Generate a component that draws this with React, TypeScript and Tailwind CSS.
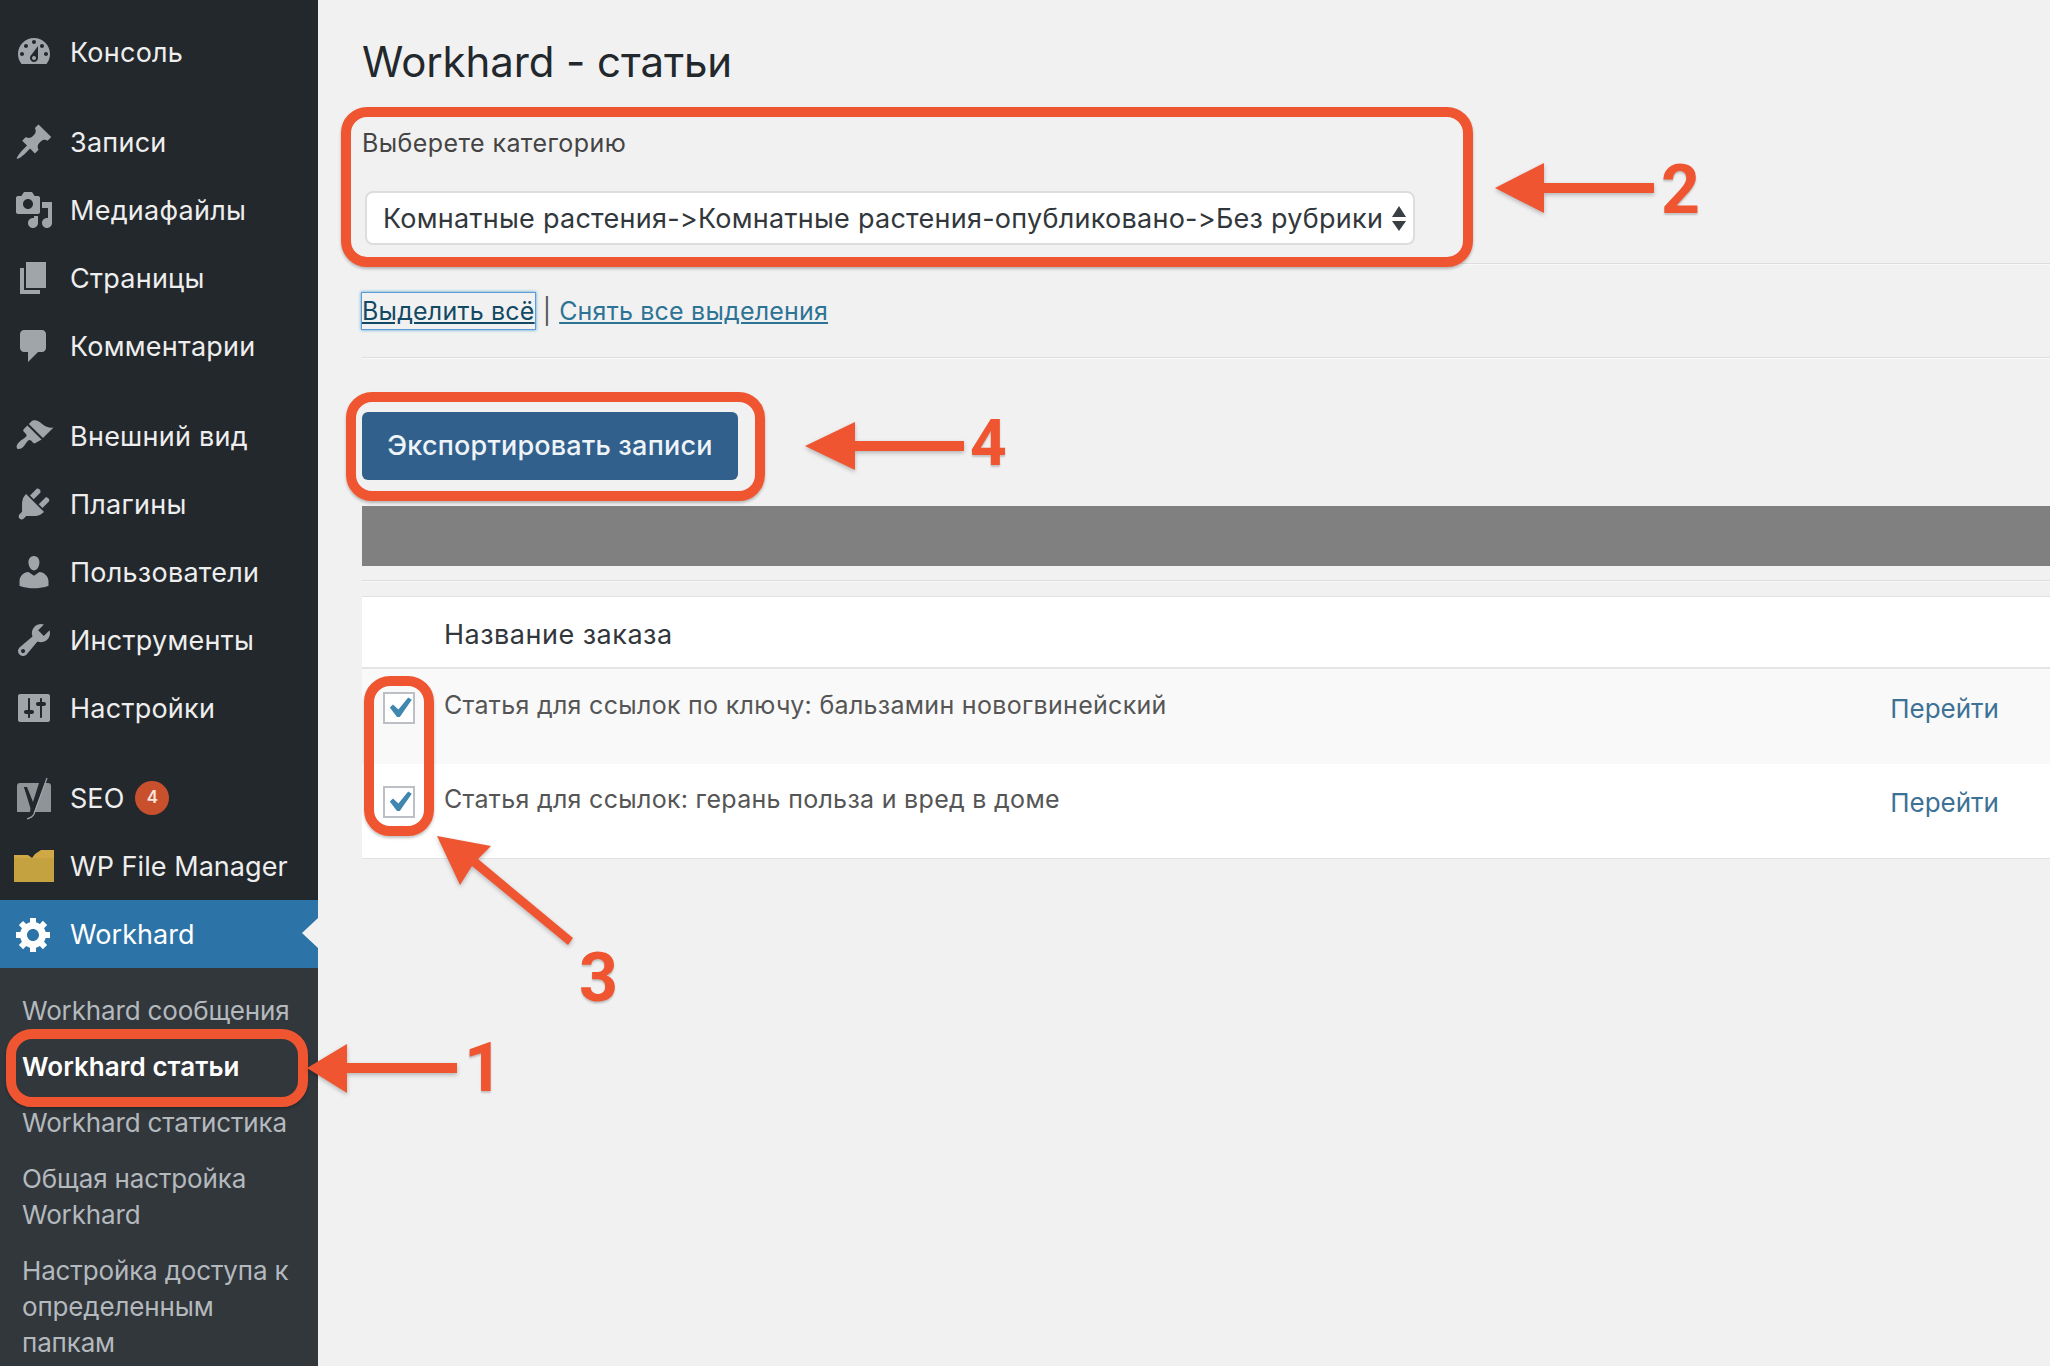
import { ReactNode } from 'react'

const FONT = "font-['Inter','Noto_Sans',sans-serif] [font-variant-ligatures:none] [font-feature-settings:'calt'_0]"

const ICONS: Record<string, string> = {
  dashboard:
    'M3.76 16h12.48c1.1-1.37 1.76-3.11 1.76-5 0-4.42-3.58-8-8-8s-8 3.58-8 8c0 1.89.66 3.63 1.76 5zM10 4c.55 0 1 .45 1 1s-.45 1-1 1-1-.45-1-1 .45-1 1-1zM6 6c.55 0 1 .45 1 1s-.45 1-1 1-1-.45-1-1 .45-1 1-1zm8 0c.55 0 1 .45 1 1s-.45 1-1 1-1-.45-1-1 .45-1 1-1zm-5.37 5.55L12 7v6c0 1.1-.9 2-2 2s-2-.9-2-2c0-.57.24-1.08.63-1.45zM4 10c.55 0 1 .45 1 1s-.45 1-1 1-1-.45-1-1 .45-1 1-1zm12 0c.55 0 1 .45 1 1s-.45 1-1 1-1-.45-1-1 .45-1 1-1zm-5 3c0-.55-.45-1-1-1s-1 .45-1 1 .45 1 1 1 1-.45 1-1z',
  post: 'M10.44 3.02l1.82-1.82 6.36 6.35-1.83 1.82c-1.05-.68-2.48-.57-3.41.36l-.75.75c-.92.93-1.04 2.35-.35 3.41l-1.83 1.82-2.41-2.41-2.8 2.79c-.42.42-3.38 2.71-3.8 2.29s1.86-3.39 2.28-3.81l2.79-2.79L4.1 9.36l1.83-1.82c1.05.69 2.48.57 3.4-.36l.75-.75c.93-.92 1.05-2.35.36-3.41z',
  media:
    'M13 11V4c0-.55-.45-1-1-1h-1.67L9 1H5L3.67 3H2c-.55 0-1 .45-1 1v7c0 .55.45 1 1 1h10c.55 0 1-.45 1-1zM7 4.5c1.38 0 2.5 1.12 2.5 2.5S8.38 9.5 7 9.5 4.5 8.38 4.5 7 5.62 4.5 7 4.5zM14 6h5v10.5c0 1.38-1.12 2.5-2.5 2.5S14 17.88 14 16.5s1.12-2.5 2.5-2.5c.17 0 .34.02.5.05V9h-3V6zm-4 8.05V13h2v3.5c0 1.38-1.12 2.5-2.5 2.5S7 17.88 7 16.5 8.12 14 9.5 14c.17 0 .34.02.5.05z',
  page: 'M6 15V2h10v13H6zm-1 1h8v2H3V5h2v11z',
  comments: 'M5 2h9c1.1 0 2 .9 2 2v7c0 1.1-.9 2-2 2h-2l-5 5v-5H5c-1.1 0-2-.9-2-2V4c0-1.1.9-2 2-2z',
  appearance:
    'M14.48 11.06L7.41 3.99l1.5-1.5c.5-.56 2.3-.47 3.51.32 1.21.8 1.43 1.28 2.91 2.1 1.18.64 2.45 1.26 4.45.85zm-.71.71L6.7 4.7 4.93 6.47c-.39.39-.39 1.02 0 1.41l1.06 1.06c.39.39.39 1.03 0 1.42-.6.6-1.43 1.11-2.21 1.69-.35.26-.7.53-1.01.84-1.34 1.14-1.81 2.55-1.23 3.33.78.58 2.19.11 3.01-.71.31-.31.58-.66.84-1.01.58-.78 1.09-1.61 1.69-2.21.39-.39 1.03-.39 1.42 0l1.06 1.06c.39.39 1.02.39 1.41 0z',
  plugins:
    'M13.11 4.36L9.87 7.6 8 5.73l3.24-3.24c.35-.34 1.05-.2 1.56.32.52.51.66 1.21.31 1.55zm-8 1.77l.91-1.12 9.01 9.01-1.19.84c-.71.71-2.63 1.16-3.82 1.16H6.14L4.9 17.26c-.59.59-1.54.59-2.12 0-.59-.58-.59-1.53 0-2.12l1.24-1.24v-3.88c0-1.13.4-3.19 1.09-3.89zm7.26 3.97l3.24-3.24c.34-.35 1.04-.21 1.55.31.52.51.66 1.21.31 1.55l-3.24 3.25z',
  users:
    'M10 9.25c-2.27 0-2.73-3.44-2.73-3.44C7 4.02 7.82 2 9.97 2c2.16 0 2.98 2.02 2.71 3.81 0 0-.41 3.44-2.68 3.44zm0 2.57L12.72 10c2.39 0 4.52 2.33 4.52 4.53v2.49s-3.65 1.13-7.24 1.13c-3.65 0-7.24-1.13-7.24-1.13v-2.49c0-2.25 1.94-4.48 4.47-4.48z',
  tools:
    'M16.68 9.77c-1.34 1.34-3.3 1.67-4.95.99l-5.41 6.52c-.99.99-2.59.99-3.58 0s-.99-2.59 0-3.57l6.52-5.42c-.68-1.65-.35-3.61.99-4.95 1.28-1.28 3.12-1.62 4.72-1.06l-2.89 2.89 2.82 2.82 2.86-2.87c.53 1.58.18 3.39-1.08 4.65zM3.81 16.21c.4.39 1.04.39 1.43 0 .4-.4.4-1.04 0-1.43-.39-.4-1.03-.4-1.43 0-.39.39-.39 1.03 0 1.43z',
  settings:
    'M18 16V4c0-.55-.45-1-1-1H3c-.55 0-1 .45-1 1v12c0 .55.45 1 1 1h14c.55 0 1-.45 1-1zM8 11h1c.55 0 1 .45 1 1s-.45 1-1 1H8v1.5c0 .28-.22.5-.5.5s-.5-.22-.5-.5V13H6c-.55 0-1-.45-1-1s.45-1 1-1h1V5.5c0-.28.22-.5.5-.5s.5.22.5.5V11zm5-2h-1c-.55 0-1-.45-1-1s.45-1 1-1h1V5.5c0-.28.22-.5.5-.5s.5.22.5.5V7h1c.55 0 1 .45 1 1s-.45 1-1 1h-1v5.5c0 .28-.22.5-.5.5s-.5-.22-.5-.5V9z',
  generic:
    'M18 12h-2.18c-.17.7-.44 1.35-.81 1.93l1.54 1.54-2.1 2.1-1.54-1.54c-.58.36-1.23.63-1.91.79V19H8v-2.18c-.68-.16-1.33-.43-1.91-.79l-1.54 1.54-2.12-2.12 1.54-1.54c-.36-.58-.63-1.23-.79-1.91H1V9.03h2.17c.16-.7.44-1.35.8-1.94L2.43 5.55l2.1-2.1 1.54 1.54c.58-.37 1.24-.64 1.93-.81V2h3v2.18c.68.16 1.33.43 1.91.79l1.54-1.54 2.12 2.12-1.54 1.54c.36.59.64 1.24.8 1.94H18V12zm-8.5 1.5c1.66 0 3-1.34 3-3s-1.34-3-3-3-3 1.34-3 3 1.34 3 3 3z',
}

function Dashicon({ name, className }: { name: string; className: string }) {
  return (
    <svg viewBox="0 0 20 20" className={`h-10 w-10 shrink-0 ${className}`} fill="currentColor">
      <path fillRule="evenodd" d={ICONS[name]} />
    </svg>
  )
}

function YoastIcon() {
  return (
    <svg viewBox="0 -2 36 44" className="ml-[3px] h-11 w-9 shrink-0">
      <path d="M3 5h21l-8 21-7-17H7l7 20-1 5H0V8a3 3 0 0 1 3-3zM28 5h3a3 3 0 0 1 3 3v26H17z" fill="#8f9499" />
      <path d="M7 9h3l6 15 6-19 5-5-10 32c-1 4-4 6-6 7l-1-2c2-1 3-2 4-5z" fill="#23282d" />
      <path d="M30 0L17 36c-1 3-4 4-7 5" stroke="#a0a5aa" strokeWidth="1.2" fill="none" />
    </svg>
  )
}

function FolderIcon() {
  return (
    <svg viewBox="0 0 40 32" className="h-8 w-10 shrink-0">
      <path d="M0 5h14l4 3h22V32H0z" fill="#c4a23f" />
      <path d="M0 5h13l5 3 3-4 6-4h13v8H0z" fill="#d0a845" />
    </svg>
  )
}

function MenuItem({
  icon,
  label,
  badge,
  active,
  latin,
}: {
  icon: ReactNode
  label: string
  badge?: string
  active?: boolean
  latin?: boolean
}) {
  return (
    <div className={`relative flex h-[68px] items-center pl-[14px] ${active ? 'bg-[#2c73a8] text-white' : 'text-[#eeeeee]'}`}>
      <div className="flex w-[56px] shrink-0">{icon}</div>
      <span className={`mt-[1px] text-[27px] leading-9 ${latin ? 'tracking-[0.05px]' : 'tracking-[0.25px]'}`}>{label}</span>
      {badge && (
        <span className="ml-[11px] flex h-[34px] w-[34px] items-center justify-center rounded-full bg-[#c9502c] text-[17px] font-semibold text-[#f5e6df]">
          {badge}
        </span>
      )}
      {active && (
        <span className="absolute right-0 top-[18px] h-0 w-0 border-y-[15px] border-r-[16px] border-y-transparent border-r-[#f1f1f1]" />
      )}
    </div>
  )
}

function Group({ items }: { items: [string, string][] }) {
  return (
    <div className="mb-[22px]">
      {items.map(([icon, label]) => (
        <MenuItem key={label} label={label} icon={<Dashicon name={icon} className="text-[#a0a5aa]" />} />
      ))}
    </div>
  )
}

function Sidebar() {
  return (
    <aside className="w-[318px] shrink-0 bg-[#23282d] pt-[18px]">
      <Group items={[['dashboard', 'Консоль']]} />
      <Group items={[['post', 'Записи'], ['media', 'Медиафайлы'], ['page', 'Страницы'], ['comments', 'Комментарии']]} />
      <Group items={[['appearance', 'Внешний вид'], ['plugins', 'Плагины'], ['users', 'Пользователи'], ['tools', 'Инструменты'], ['settings', 'Настройки']]} />
      <MenuItem latin label="SEO" badge="4" icon={<YoastIcon />} />
      <MenuItem latin label="WP File Manager" icon={<FolderIcon />} />
      <MenuItem latin label="Workhard" active icon={<Dashicon name="generic" className="text-white" />} />
      <div className="h-full bg-[#32373c] px-[22px] pt-[15px] text-[26px] leading-9 tracking-[-0.15px] text-[#b4b9be]">
        <div className="py-[10px]">Workhard сообщения</div>
        <div className="py-[10px] font-semibold tracking-[0.05px] text-white">Workhard статьи</div>
        <div className="py-[10px]">Workhard статистика</div>
        <div className="py-[10px]">Общая настройка Workhard</div>
        <div className="py-[10px]">Настройка доступа к определенным папкам</div>
      </div>
    </aside>
  )
}

function Separator() {
  return <div className="h-[2px] border-t border-[#dddddd] bg-[#f9f9f9]" />
}

function CheckBox() {
  return (
    <span className="flex h-8 w-8 shrink-0 items-center justify-center border-2 border-[#bcc0c4] bg-white">
      <svg viewBox="0 0 20 20" className="h-10 w-10 shrink-0" fill="#4087b0">
        <path d="M14.6 4.7l1.8 1.2-6 8.6H9L5.4 9.8l1.6-1.5 2.7 2.4z" />
      </svg>
    </span>
  )
}

function OrderRow({ title, striped }: { title: string; striped?: boolean }) {
  return (
    <div className={`flex pl-[21px] pr-[51px] ${striped ? 'h-[95px] bg-[#f9f9f9]' : 'h-[94px] bg-white'}`}>
      <div className={`${striped ? 'mt-[23px]' : 'mt-[22px]'} flex w-[61px] shrink-0`}>
        <CheckBox />
      </div>
      <div className={`${striped ? 'mt-[18px]' : 'mt-[17px]'} flex-1 text-[25px] leading-9 tracking-[0.3px] text-[#555555]`}>{title}</div>
      <a className={`${striped ? 'mt-[22px]' : 'mt-[21px]'} text-[26px] leading-9 text-[#3d7196]`}>Перейти</a>
    </div>
  )
}

function Callout({ className }: { className: string }) {
  return <div className={`absolute rounded-[26px] border-[10px] border-[#ee5530] shadow-[0_2px_3px_rgba(0,0,0,0.25)] ${className}`} />
}

function Step({ className, children }: { className: string; children: ReactNode }) {
  return (
    <span className={`absolute font-['Roboto',sans-serif] text-[68px] font-bold leading-none text-[#ee5530] [text-shadow:0_2px_2px_rgba(0,0,0,0.2)] ${className}`}>
      {children}
    </span>
  )
}

function Annotations() {
  return (
    <div className="pointer-events-none absolute inset-0">
      <Callout className="left-[6px] top-[1029px] h-[78px] w-[302px]" />
      <Callout className="left-[341px] top-[107px] h-[160px] w-[1132px]" />
      <Callout className="left-[346px] top-[392px] h-[109px] w-[419px]" />
      <Callout className="left-[364px] top-[676px] h-[160px] w-[70px]" />
      <svg className="absolute inset-0 h-full w-full drop-shadow-[0_2px_2px_rgba(0,0,0,0.25)]" viewBox="0 0 2050 1366" fill="#ee5530">
        <path d="M307 1068l40-24v19h110v10H347v20z" />
        <path d="M1495 188l49-25v20h110v10h-110v20z" />
        <path d="M805 446l50-24v19h109v10H855v19z" />
        <path d="M437 836l54 10-13 13 95 79-5 7-96-79-12 19z" />
      </svg>
      <Step className="left-[464px] top-[1034px]">1</Step>
      <Step className="left-[1661px] top-[156px]">2</Step>
      <Step className="left-[579px] top-[944px]">3</Step>
      <Step className="left-[970px] top-[412px] !text-[64px]">4</Step>
    </div>
  )
}

export default function App() {
  return (
    <div className={`relative flex h-[1366px] w-[2050px] overflow-hidden bg-[#f1f1f1] ${FONT}`}>
      <Sidebar />
      <main className="flex-1 pl-[44px] pt-[38px]">
        <h1 className="text-[42px] leading-[48px] tracking-[-0.1px] text-[#23282d]">Workhard - статьи</h1>

        <div className="mt-[39px] text-[25px] leading-9 tracking-[0.4px] text-[#444444]">Выберете категорию</div>
        <div className="ml-[3px] mt-[30px] flex h-[54px] w-[1050px] items-center justify-between rounded-lg border-2 border-[#dddddd] bg-white pl-[16px] pr-[7px] text-[27px] tracking-[0.26px] text-[#32373c]">
          <span className="mt-[2px]">Комнатные растения-&gt;Комнатные растения-опубликовано-&gt;Без рубрики</span>
          <span className="flex flex-col gap-[4px]">
            <span className="h-0 w-0 border-x-[7px] border-b-[11px] border-x-transparent border-b-[#3a3f44]" />
            <span className="h-0 w-0 border-x-[7px] border-t-[10px] border-x-transparent border-t-[#3a3f44]" />
          </span>
        </div>

        <div className="mt-[18px]">
          <Separator />
        </div>
        <div className="mt-[27px] flex h-9 items-center pt-[2px] text-[25px] leading-9 tracking-[0.2px] text-[#555555]">
          <a className="text-[#124964] underline shadow-[0_0_0_1px_#5b9dd9,0_0_3px_1px_rgba(30,140,190,0.8)]">Выделить всё</a>
          <span className="mx-[8px]">|</span>
          <a className="text-[#2c7396] underline">Снять все выделения</a>
        </div>
        <div className="mt-[29px]">
          <Separator />
        </div>

        <button className="mt-[53px] block h-[68px] w-[376px] rounded-md bg-[#32608c] pt-[1px] text-[27px] font-medium tracking-[0.2px] text-[#eef4f8]">
          Экспортировать записи
        </button>
        <div className="mt-[26px] h-[60px] bg-[#808080]" />
        <div className="mt-[14px]">
          <Separator />
        </div>

        <section className="mt-[14px] border-y border-[#e1e1e1] bg-white">
          <div className="flex h-[72px] items-center border-b-2 border-[#e5e5e5] pl-[82px] pt-[7px] text-[27px] tracking-[0.5px] text-[#32373c]">
            Название заказа
          </div>
          <OrderRow striped title="Статья для ссылок по ключу: бальзамин новогвинейский" />
          <OrderRow title="Статья для ссылок: герань польза и вред в доме" />
        </section>
      </main>
      <Annotations />
    </div>
  )
}
